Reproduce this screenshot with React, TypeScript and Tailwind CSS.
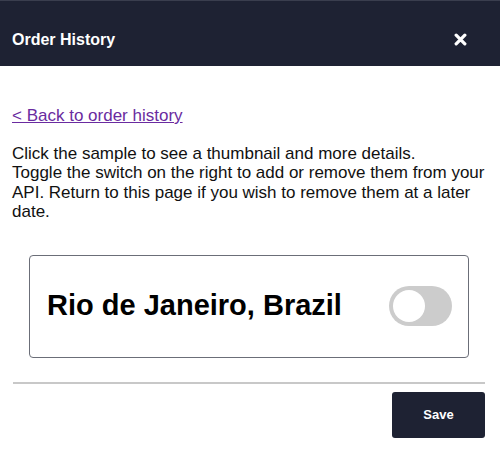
import { useState } from "react"

function App() {
    const [ativo, setAtivo] = useState(false)

    return (
        <div className="w-[500px] h-[453px] bg-white font-['Liberation_Sans',Arial,sans-serif] text-black">
            {/* Cabeçalho */}
            <div className="h-[66px] bg-[#1e2233] border-t border-[#3a3e4e] flex items-center justify-between pt-[12px] pl-3 pr-[33px]">
                <h2 className="text-[16px] font-bold text-white">Order History</h2>
                <button className="text-white" title="Fechar">
                    <svg width="13" height="13" viewBox="0 0 12 12">
                        <path d="M2 2 L10 10 M10 2 L2 10" stroke="white" strokeWidth="3" strokeLinecap="round" />
                    </svg>
                </button>
            </div>

            {/* Conteúdo */}
            <div className="px-3 pt-[40px]">
                <div className="leading-[19px]">
                    <a href="#" className="text-[17px] text-[#6a2ba0] underline">
                        &lt; Back to order history
                    </a>
                </div>
                <p className="mt-[19px] text-[17px] leading-[19.4px] text-[#111]">
                    Click the sample to see a thumbnail and more details.
                    <br />
                    Toggle the switch on the right to add or remove them from your API. Return to this page if you wish to remove them at a later date.
                </p>

                <div className="ml-[17px] mt-[33px] w-[440px] h-[103px] border border-[#6b6e78] rounded-[4px] flex items-center justify-between pl-[17px] pr-[16px]">
                    <span className="text-[29px] font-bold">Rio de Janeiro, Brazil</span>
                    <button
                        onClick={() => setAtivo(!ativo)}
                        className={`w-[63px] h-[40px] rounded-full flex items-center px-[4px] ${ativo ? 'bg-[#1e2233] justify-end' : 'bg-[#cccccc] justify-start'}`}
                    >
                        <span className="w-[32px] h-[32px] rounded-full bg-white block" />
                    </button>
                </div>

                <div className="mt-[24px] mr-[3px] ml-px h-[2px] bg-[#c8c8c8]" />

                <div className="flex justify-end mr-[3px] mt-[8px]">
                    <button className="w-[93px] h-[46px] bg-[#1e2233] rounded-[3px] text-white text-[13px] font-bold">
                        Save
                    </button>
                </div>
            </div>
        </div>
    )
}

export default App
